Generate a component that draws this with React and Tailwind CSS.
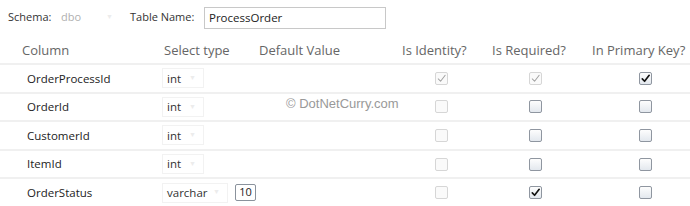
import React from 'react';

const rows = [
  { name: 'OrderProcessId', type: 'int', identity: 'checked', required: 'dimChecked', pk: true },
  { name: 'OrderId', type: 'int', identity: 'off', required: 'on', pk: false },
  { name: 'CustomerId', type: 'int', identity: 'off', required: 'on', pk: false },
  { name: 'ItemId', type: 'int', identity: 'off', required: 'on', pk: false },
  { name: 'OrderStatus', type: 'varchar', size: '10', identity: 'off', required: 'checkedOn', pk: false },
];

const Tick = ({ dark }) => (
  <svg viewBox="0 0 12 12" className="w-[11px] h-[11px]">
    <path
      d="M2.5 6.5 L5 9 L10 2.5"
      fill="none"
      stroke={dark ? '#111' : '#a0a0a0'}
      strokeWidth={dark ? 1.8 : 1.1}
      strokeLinecap="round"
      strokeLinejoin="round"
    />
  </svg>
);

const Box = ({ state }) => {
  const disabled = state === 'off' || state === 'checked' || state === 'dimChecked';
  const checked = state !== 'off' && state !== 'on';
  const dark = state === 'checkedOn' || state === 'pk';
  return (
    <div
      className={`w-[13px] h-[13px] rounded-[2px] border flex items-center justify-center ${
        disabled
          ? 'border-[#d6d6d6] bg-[#fafafa]'
          : 'border-[#8f96a0] bg-gradient-to-b from-[#fdfdfd] to-[#e3e8ee]'
      }`}
    >
      {checked && <Tick dark={dark} />}
    </div>
  );
};

const TypeSelect = ({ value, wide }) => (
  <div
    className={`h-[20px] ${wide ? 'w-[66px]' : 'w-[42px]'} border border-[#f2f2f2] flex items-center justify-between pl-[4px] pr-[7px] text-[#333]`}
  >
    <span>{value}</span>
    <span className="text-[7px] text-[#ececec]">▼</span>
  </div>
);

export default function App() {
  return (
    <div className="w-[690px] h-[206px] bg-white overflow-hidden relative font-['Open_Sans',sans-serif] text-[#333]">
      <div className="flex items-center h-[34px] pt-[1px] text-[11px]">
        <span className="ml-[8px] w-[53px]">Schema:</span>
        <div className="w-[56px] flex items-center justify-between pr-[4px] text-[#b0b0b0]">
          <span>dbo</span>
          <span className="text-[7px] text-[#ececec]">▼</span>
        </div>
        <span className="ml-[13px] w-[74px]">Table Name:</span>
        <div className="w-[182px] h-[22px] border border-[#c8c8c8] flex items-center pl-[4px] text-[11.5px] text-[#222]">
          ProcessOrder
        </div>
      </div>

      <div className="grid grid-cols-[164px_95px_143px_90px_100px_1fr] h-[28px] pt-[4px] items-center text-[13px] text-[#666] mt-[1px]">
        <span className="pl-[22px]">Column</span>
        <span>Select type</span>
        <span>Default Value</span>
        <span>Is Identity?</span>
        <span>Is Required?</span>
        <span>In Primary Key?</span>
      </div>

      <div className="border-t-2 border-[#f0f0f0]">
        {rows.map((r) => (
          <div
            key={r.name}
            className="grid grid-cols-[162px_273px_94px_110px_1fr] h-[28.6px] items-center border-b-2 border-[#f0f0f0] text-[11.5px]"
          >
            <span className="pl-[27px] text-[#222]">{r.name}</span>
            <div className="flex items-center gap-[7px]">
              <TypeSelect value={r.type} wide={r.type === 'varchar'} />
              {r.size && (
                <div className="w-[21px] h-[17px] border border-[#8a929c] rounded-[2px] flex items-center justify-center text-[11px] text-[#222]">
                  {r.size}
                </div>
              )}
            </div>
            <Box state={r.identity} />
            <Box state={r.required} />
            <Box state={r.pk ? 'pk' : 'on'} />
          </div>
        ))}
      </div>

      <div className="absolute left-[286px] top-[94px] text-[13px] text-[#999] font-['Liberation_Sans',Arial,sans-serif]">
        © DotNetCurry.com
      </div>
    </div>
  );
}
